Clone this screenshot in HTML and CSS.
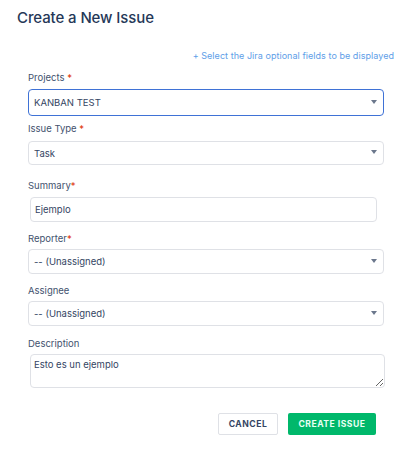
FILE: index.html
```html
<!DOCTYPE html>
<html lang="en">
<head>
<meta charset="utf-8">
<title>Create a New Issue</title>
<link rel="stylesheet" href="styles.css">
</head>
<body>
<div class="dialog">
  <h1 class="title">Create a New Issue</h1>
  <div class="optional-row"><a class="optional-link" href="#">+ Select the Jira optional fields to be displayed</a></div>
  <form class="form">
    <div class="field field-first">
      <label class="label">Projects <span class="req">*</span></label>
      <div class="select select-focus"><span class="value">KANBAN TEST</span><svg class="caret" width="6" height="4" viewBox="0 0 6 4"><path d="M0 0H6L3 4Z" fill="#6B778C"/></svg></div>
    </div>
    <div class="field field-type">
      <label class="label">Issue Type <span class="req">*</span></label>
      <div class="select select-short"><span class="value">Task</span><svg class="caret" width="6" height="4" viewBox="0 0 6 4"><path d="M0 0H6L3 4Z" fill="#6B778C"/></svg></div>
    </div>
    <div class="field field-summary">
      <label class="label">Summary<span class="req">*</span></label>
      <div class="input"><span class="value">Ejemplo</span></div>
    </div>
    <div class="field">
      <label class="label">Reporter<span class="req">*</span></label>
      <div class="select"><span class="value">-- (Unassigned)</span><svg class="caret" width="6" height="4" viewBox="0 0 6 4"><path d="M0 0H6L3 4Z" fill="#6B778C"/></svg></div>
    </div>
    <div class="field">
      <label class="label">Assignee</label>
      <div class="select"><span class="value">-- (Unassigned)</span><svg class="caret" width="6" height="4" viewBox="0 0 6 4"><path d="M0 0H6L3 4Z" fill="#6B778C"/></svg></div>
    </div>
    <div class="field field-desc">
      <label class="label">Description</label>
      <textarea class="textarea">Esto es un ejemplo</textarea>
    </div>
    <div class="actions">
      <button type="button" class="btn btn-cancel">CANCEL</button>
      <button type="button" class="btn btn-create">CREATE ISSUE</button>
    </div>
  </form>
</div>
</body>
</html>
```

FILE: styles.css
```css
html, body {
  margin: 0;
  padding: 0;
  background: #ffffff;
}
body {
  font-family: Inter, "Liberation Sans", Arial, sans-serif;
  color: #172B4D;
}
.dialog {
  width: 409px;
  height: 463px;
  box-sizing: border-box;
  padding: 8px 0 0 0;
}
.title {
  margin: 0 0 0 17px;
  font-size: 15px;
  line-height: 20px;
  font-weight: 500;
  color: #253858;
  letter-spacing: -0.1px;
}
.optional-row {
  display: flex;
  justify-content: flex-end;
  padding-right: 15px;
  margin-top: 22px;
}
.optional-link {
  font-size: 9px;
  line-height: 12px;
  color: #5E9EE8;
  text-decoration: none;
  letter-spacing: 0.05px;
}
.form {
  display: flex;
  flex-direction: column;
  padding-left: 28px;
  margin: 0;
}
.field {
  display: flex;
  flex-direction: column;
  margin-top: 11px;
}
.field-first { margin-top: 10px; }
.field-type { margin-top: 7px; }
.field-summary { margin-top: 15px; }
.field-desc { margin-top: 12px; }
.label {
  font-size: 9.5px;
  line-height: 12px;
  color: #42526E;
  margin-bottom: 4px;
}
.field-first .label,
.field-summary .label { margin-bottom: 5px; }
.field-type .label { margin-bottom: 6px; }
.req {
  color: #DE350B;
}
.select {
  box-sizing: border-box;
  width: 356px;
  height: 25px;
  border: 1px solid #DFE1E6;
  border-radius: 4px;
  display: flex;
  align-items: center;
  justify-content: space-between;
  padding: 0 6px 0 5px;
  background: #fff;
}
.select-focus {
  height: 27px;
  border: 1.5px solid #3F72D6;
}
.select-short { height: 24px; }
.caret {
  display: block;
  margin-top: -2px;
}
.value {
  font-size: 9.5px;
  color: #344563;
}
.input {
  box-sizing: border-box;
  width: 347px;
  height: 25px;
  margin-left: 2px;
  border: 1px solid #DFE1E6;
  border-radius: 4px;
  display: flex;
  align-items: center;
  padding-left: 4px;
}
.textarea {
  box-sizing: border-box;
  width: 355px;
  height: 34px;
  margin: 0 0 0 2px;
  border: 1px solid #DFE1E6;
  border-radius: 4px;
  padding: 4px 3px;
  font-family: Inter, "Liberation Sans", Arial, sans-serif;
  font-size: 9.5px;
  line-height: 12px;
  color: #344563;
  resize: vertical;
  outline: none;
}
.actions {
  display: flex;
  justify-content: flex-end;
  gap: 10px;
  margin-top: 25px;
  padding-right: 33px;
}
.btn {
  box-sizing: border-box;
  height: 22px;
  border-radius: 2px;
  font-family: Inter, "Liberation Sans", Arial, sans-serif;
  font-size: 8.6px;
  font-weight: 700;
  letter-spacing: 0.5px;
  padding: 0;
  cursor: pointer;
}
.btn-cancel {
  width: 60px;
  background: #fff;
  border: 1px solid #DFE1E6;
  color: #344563;
}
.btn-create {
  width: 88px;
  background: #00B86B;
  border: none;
  color: #E8FFF3;
}
```
